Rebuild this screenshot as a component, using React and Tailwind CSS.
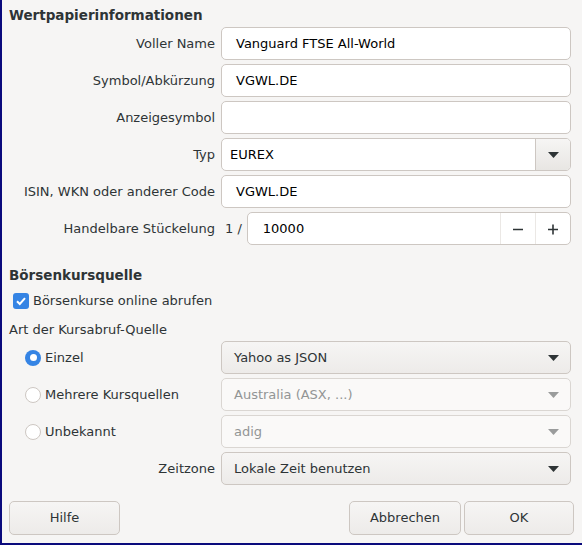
import React from 'react';

const font = { fontFamily: '"DejaVu Sans", "Liberation Sans", sans-serif' };

// small down triangle used by all combo boxes
function Arrow({ disabled }) {
  return (
    <svg width="11" height="6" viewBox="0 0 11 6" className="shrink-0">
      <path d="M0 0 L11 0 L5.5 6 Z" fill={disabled ? '#9a9c9c' : '#2e3436'} />
    </svg>
  );
}

function Row({ label, children }) {
  return (
    <div className="flex items-center h-[33px]">
      <div className="w-[206px] text-right text-[#2e3436] whitespace-nowrap">{label}</div>
      <div className="ml-[6px] w-[350px] h-full flex">{children}</div>
    </div>
  );
}

function TextField({ value }) {
  return (
    <div className="flex-1 h-full flex items-center pl-[14px] bg-white border border-[#cdc7c2] rounded-[5px] text-black">
      {value}
    </div>
  );
}

function Combo({ value, disabled }) {
  return (
    <div
      className={`flex-1 h-full flex items-center justify-between pl-[12px] pr-[11px] border rounded-[5px] ${
        disabled
          ? 'bg-[#faf9f8] border-[#dad6d2] text-[#929595]'
          : 'bg-gradient-to-b from-[#f6f5f4] to-[#edebe9] border-[#cdc7c2] text-[#2e3436]'
      }`}
    >
      <span>{value}</span>
      <Arrow disabled={disabled} />
    </div>
  );
}

function Radio({ checked, label }) {
  return (
    <div className="w-[194px] pl-[23px] flex items-center gap-[4px] text-[#2e3436]">
      {checked ? (
        <div className="w-[16px] h-[16px] rounded-full bg-[#3584e4] flex items-center justify-center">
          <div className="w-[7px] h-[7px] rounded-full bg-white" />
        </div>
      ) : (
        <div className="w-[16px] h-[16px] rounded-full bg-white border border-[#cdc7c2]" />
      )}
      <span>{label}</span>
    </div>
  );
}

function Button({ children, w = 'w-[111px]' }) {
  return (
    <div className={`${w} h-[34px] flex items-center justify-center border border-[#cdc7c2] rounded-[5px] bg-gradient-to-b from-[#f6f5f4] to-[#edebe9] text-[#2e3436]`}>
      {children}
    </div>
  );
}

export default function App() {
  return (
    <div
      className="w-[582px] h-[545px] bg-[#f6f5f4] border-l-2 border-b-2 border-[#0a0a7c] text-[13px] leading-4 overflow-hidden"
      style={font}
    >
      <div className="pl-[7px] pt-[7px]">
        {/* Wertpapierinformationen */}
        <div className="font-bold text-[13.5px] text-[#2e3436]">Wertpapierinformationen</div>
        <div className="mt-[4px] flex flex-col gap-[4px]">
          <Row label="Voller Name"><TextField value="Vanguard FTSE All-World" /></Row>
          <Row label="Symbol/Abkürzung"><TextField value="VGWL.DE" /></Row>
          <Row label="Anzeigesymbol"><TextField value="" /></Row>
          <Row label="Typ">
            <div className="flex-1 h-full flex bg-white border border-[#cdc7c2] rounded-[5px] overflow-hidden">
              <div className="flex-1 flex items-center pl-[8px] text-black">EUREX</div>
              <div className="w-[35px] flex items-center justify-center border-l border-[#cdc7c2] bg-gradient-to-b from-[#f6f5f4] to-[#e8e6e3]">
                <Arrow />
              </div>
            </div>
          </Row>
          <Row label="ISIN, WKN oder anderer Code"><TextField value="VGWL.DE" /></Row>
          <Row label="Handelbare Stückelung">
            <div className="flex items-center pl-[4px] pr-[5px] text-[#2e3436]">1 /</div>
            <div className="flex-1 h-full flex bg-white border border-[#cdc7c2] rounded-[5px] overflow-hidden">
              <div className="flex-1 flex items-center pl-[15px] text-black">10000</div>
              <div className="w-[35px] flex items-center justify-center border-l border-[#ebe8e5]">
                <svg width="12" height="12" viewBox="0 0 12 12"><path d="M1 6.5 H11" stroke="#2e3436" strokeWidth="1.6" /></svg>
              </div>
              <div className="w-[35px] flex items-center justify-center border-l border-[#ebe8e5]">
                <svg width="12" height="12" viewBox="0 0 12 12"><path d="M1 6.5 H11 M6 1.5 V11.5" stroke="#2e3436" strokeWidth="1.6" /></svg>
              </div>
            </div>
          </Row>
        </div>

        {/* Börsenkursquelle */}
        <div className="mt-[22px] font-bold text-[13.5px] text-[#2e3436]">Börsenkursquelle</div>
        <div className="mt-[10px] ml-[4px] flex items-center gap-[4px] text-[#2e3436]">
          <div className="w-[16px] h-[16px] rounded-[3px] bg-[#3584e4] flex items-center justify-center">
            <svg width="12" height="12" viewBox="0 0 12 12">
              <path d="M2 6.2 L4.8 9 L10 3.2" fill="none" stroke="white" strokeWidth="2" />
            </svg>
          </div>
          <span>Börsenkurse online abrufen</span>
        </div>
        <div className="mt-[13px] text-[#2e3436]">Art der Kursabruf-Quelle</div>

        <div className="mt-[3px] flex flex-col gap-[4px] -ml-[7px]">
          <div className="flex items-center h-[33px]">
            <Radio checked label="Einzel" />
            <div className="ml-[25px] w-[350px] h-full flex"><Combo value="Yahoo as JSON" /></div>
          </div>
          <div className="flex items-center h-[33px]">
            <Radio label="Mehrere Kursquellen" />
            <div className="ml-[25px] w-[350px] h-full flex"><Combo value="Australia (ASX, ...)" disabled /></div>
          </div>
          <div className="flex items-center h-[33px]">
            <Radio label="Unbekannt" />
            <div className="ml-[25px] w-[350px] h-full flex"><Combo value="adig" disabled /></div>
          </div>
          <div className="flex items-center h-[33px]">
            <div className="w-[213px] text-right text-[#2e3436]">Zeitzone</div>
            <div className="ml-[6px] w-[350px] h-full flex"><Combo value="Lokale Zeit benutzen" /></div>
          </div>
        </div>

        {/* buttons */}
        <div className="mt-[16px] flex items-center pr-[8px]">
          <Button>Hilfe</Button>
          <div className="flex-1" />
          <Button w="w-[112px]">Abbrechen</Button>
          <div className="w-[3px]" />
          <Button w="w-[110px]">OK</Button>
        </div>
      </div>
    </div>
  );
}
